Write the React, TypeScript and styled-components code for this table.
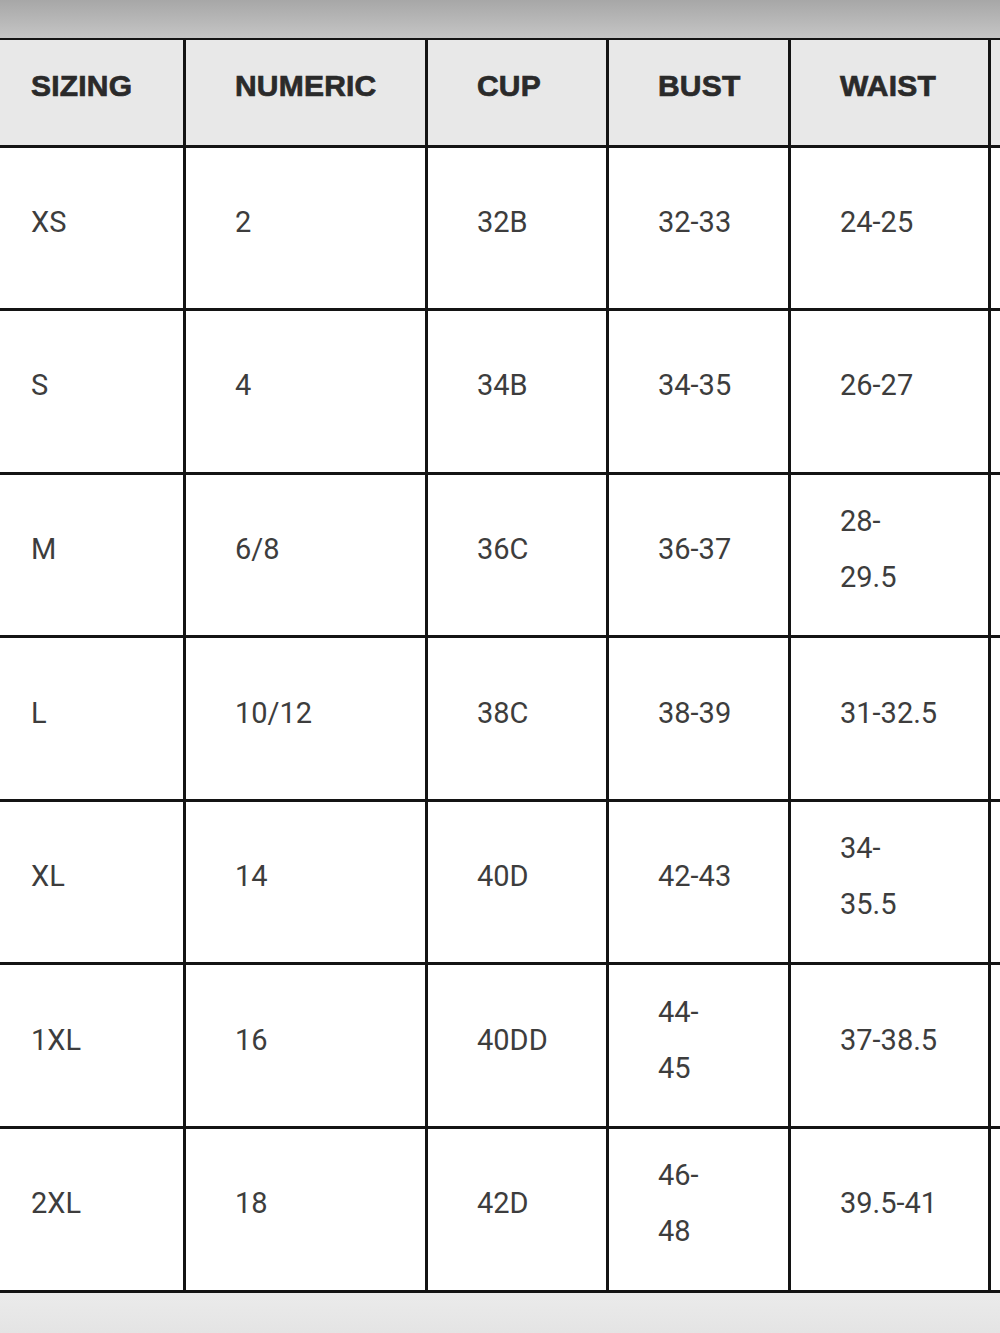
import React from 'react'
import styled, { createGlobalStyle } from 'styled-components'

const GlobalStyle = createGlobalStyle`
  html, body {
    margin: 0;
    padding: 0;
    background: #ffffff;
  }
`

const Page = styled.div`
  width: 1000px;
  height: 1333px;
  display: flex;
  flex-direction: column;
  overflow: hidden;
  background: #ffffff;
`

const TopBar = styled.div`
  height: 38px;
  flex: none;
  background: linear-gradient(to bottom, #a7a7a7, #c5c5c5);
`

const Scroller = styled.div`
  flex: none;
  overflow: hidden;
  width: 1000px;
`

const Table = styled.table`
  margin-left: -21px;
  border-collapse: collapse;
  table-layout: fixed;
  width: 1209px;
`

const HeadCell = styled.th`
  height: 107px;
  padding: 0 0 12px 49px;
  box-sizing: border-box;
  background: #e8e8e8;
  border: 3px solid #141414;
  border-top-width: 2px;
  text-align: left;
  vertical-align: middle;
  font-family: 'Liberation Sans', Arial, sans-serif;
  font-weight: 700;
  font-size: 30px;
  color: #2a2a2a;
  letter-spacing: 0.2px;
  -webkit-text-stroke: 0.7px #2a2a2a;
`

const Cell = styled.td`
  height: 163.6px;
  padding: 0 0 12px 49px;
  box-sizing: border-box;
  border: 3px solid #141414;
  text-align: left;
  vertical-align: middle;
  font-family: Roboto, 'Noto Sans', sans-serif;
  font-weight: 400;
  font-size: 29px;
  line-height: 56px;
  color: #3d3d3d;
`

const BottomBar = styled.div`
  flex: 1;
  background: linear-gradient(to bottom, #ebebeb, #e4e4e4);
`

const widths = [204, 242, 181, 182, 200, 200]
const headers = ['SIZING', 'NUMERIC', 'CUP', 'BUST', 'WAIST', '']

const rows: string[][] = [
  ['XS', '2', '32B', '32-33', '24-25', ''],
  ['S', '4', '34B', '34-35', '26-27', ''],
  ['M', '6/8', '36C', '36-37', '28-|29.5', ''],
  ['L', '10/12', '38C', '38-39', '31-32.5', ''],
  ['XL', '14', '40D', '42-43', '34-|35.5', ''],
  ['1XL', '16', '40DD', '44-|45', '37-38.5', ''],
  ['2XL', '18', '42D', '46-|48', '39.5-41', ''],
]

const CellText = ({ value }: { value: string }) => {
  const parts = value.split('|')
  return (
    <>
      {parts.map((p, i) => (
        <React.Fragment key={i}>
          {i > 0 && <br />}
          {p}
        </React.Fragment>
      ))}
    </>
  )
}

const App = () => {
  return (
    <Page>
      <GlobalStyle />
      <TopBar />
      <Scroller>
        <Table>
          <colgroup>
            {widths.map((w, i) => (
              <col key={i} style={{ width: w }} />
            ))}
          </colgroup>
          <thead>
            <tr>
              {headers.map((h, i) => (
                <HeadCell key={i}>{h}</HeadCell>
              ))}
            </tr>
          </thead>
          <tbody>
            {rows.map(r => (
              <tr key={r[0]}>
                {r.map((v, i) => (
                  <Cell key={i}>
                    <CellText value={v} />
                  </Cell>
                ))}
              </tr>
            ))}
          </tbody>
        </Table>
      </Scroller>
      <BottomBar />
    </Page>
  )
}

export default App
